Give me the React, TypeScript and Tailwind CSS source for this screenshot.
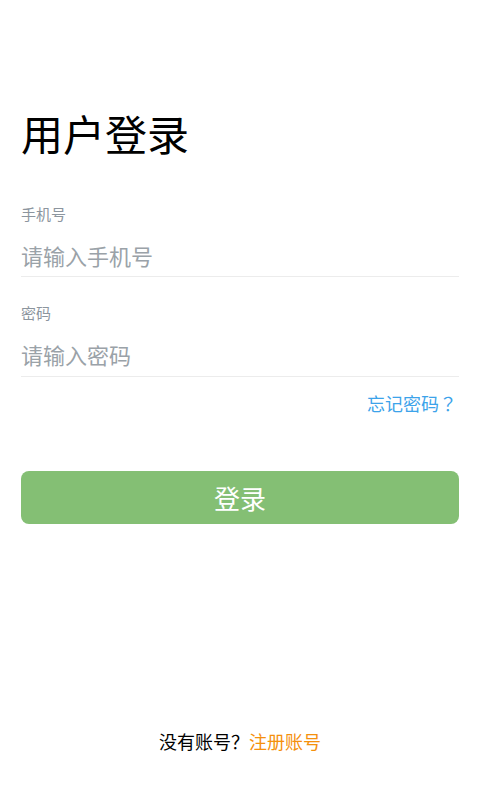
import React from "react";

export default function App() {
  const font = { fontFamily: '"Noto Sans CJK SC", "Noto Sans", sans-serif' };
  const q = { fontFamily: '"Noto Sans CJK TC", sans-serif' };
  return (
    <div lang="zh-CN" className="w-[480px] h-[800px] bg-white flex flex-col px-[21px]" style={font}>
      <h1 className="mt-[104px] text-[42px] leading-[58px] text-black font-normal">用户登录</h1>
      <div className="mt-[42px] text-[15px] leading-[20px] text-[#8c959e]">手机号</div>
      <div className="mt-[12px] h-[41px] flex items-center text-[22px] text-[#9aa2a8] border-b border-[#ececec] pb-[2px]">请输入手机号</div>
      <div className="mt-[26px] text-[15px] leading-[20px] text-[#8c959e]">密码</div>
      <div className="mt-[12px] h-[42px] flex items-center text-[22px] text-[#9aa2a8] border-b border-[#ececec] pb-[2px]">请输入密码</div>
      <div className="mt-[13px] flex justify-end text-[18px] leading-[26px] text-[#3ca3ea] pr-[2px]">
        忘记密码<span style={q}>？</span>
      </div>
      <button className="mt-[55px] h-[53px] w-full rounded-[8px] bg-[#84bf74] text-white text-[26px]">登录</button>
      <div className="flex-1" />
      <div className="mb-[46px] text-center text-[18px] leading-[26px] text-black">
        没有账号<span style={q}>？</span><span className="text-[#f5900d]">注册账号</span>
      </div>
    </div>
  );
}
